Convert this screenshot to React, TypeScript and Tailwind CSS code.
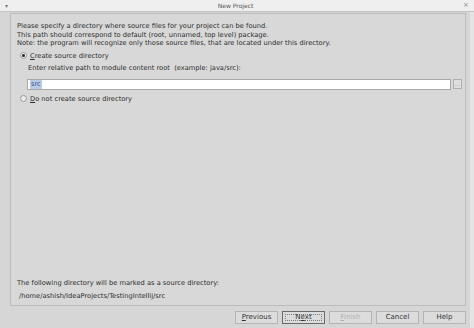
import { useState } from 'react'

const font = { fontFamily: '"DejaVu Sans", "Liberation Sans", sans-serif' }

type DialogButtonProps = {
  label: string
  mnemonic?: number
  disabled?: boolean
  focused?: boolean
}

function DialogButton({ label, mnemonic, disabled, focused }: DialogButtonProps) {
  const text =
    mnemonic === undefined ? (
      label
    ) : (
      <>
        {label.slice(0, mnemonic)}
        <span className="underline">{label[mnemonic]}</span>
        {label.slice(mnemonic + 1)}
      </>
    )

  return (
    <button
      type="button"
      disabled={disabled}
      className={
        focused
          ? 'flex h-[13px] w-[43px] items-center justify-center border border-[#6b6b6b] bg-[#dcdcdc] p-[2px]'
          : 'flex h-[13px] w-[43px] items-center justify-center border border-[#b4b4b4] bg-[#dcdcdc]'
      }
    >
      {focused ? (
        <span className="flex h-full w-full items-center justify-center border border-dotted border-[#7a7a7a] text-[7px] leading-none text-[#333]">{text}</span>
      ) : (
        <span className={disabled ? 'text-[7px] leading-none text-[#b0b0b0]' : 'text-[7px] leading-none text-[#333]'}>{text}</span>
      )}
    </button>
  )
}

function Radio({ checked }: { checked: boolean }) {
  return (
    <span className="flex h-[7px] w-[7px] items-center justify-center rounded-full border border-[#9a9a9a] bg-[#ececec]">
      {checked ? <span className="h-[3px] w-[3px] rounded-full bg-[#222]" /> : null}
    </span>
  )
}

export default function App() {
  const [createDir, setCreateDir] = useState(true)

  return (
    <div className="flex h-[328px] w-[474px] flex-col bg-[#d6d6d6] text-[#2e2e2e]" style={font}>
      <div className="flex h-[12px] items-center justify-between border-b border-[#c4c4c4] bg-[#efefef] px-[5px]">
        <span className="text-[6px] leading-none text-[#777]">▾</span>
        <span className="text-[6px] leading-none text-[#555]">New Project</span>
        <span className="text-[7px] leading-none text-[#888]">×</span>
      </div>

      <div className="flex flex-1 flex-col border-r-[4px] border-[#e4e4e4] pl-[10px] pr-[4px] pt-[1px]">
        <div className="flex flex-1 flex-col border border-[#bcbcbc] bg-[#d8d8d8] pb-[5px] pl-[6px] pr-[3px] pt-[8px] text-[6.7px] leading-[8.5px]">
          <p>Please specify a directory where source files for your project can be found.</p>
          <p>This path should correspond to default (root, unnamed, top level) package.</p>
          <p>Note: the program will recognize only those source files, that are located under this directory.</p>

          <label className="mt-[4px] flex items-center gap-[3px] pl-[3px]" onClick={() => setCreateDir(true)}>
            <Radio checked={createDir} />
            <span>
              <span className="underline">C</span>reate source directory
            </span>
          </label>

          <p className="mt-[4px] pl-[11px]">Enter relative path to module content root&nbsp; (example: java/src):</p>

          <div className="mt-[6px] flex items-center gap-[2px] pl-[10px]">
            <div className="flex h-[11px] flex-1 items-center border border-[#a9a9a9] bg-white px-[2px]">
              <span className="bg-[#b9cbe6] px-[1px] leading-[9px] text-[#3a4f8a]">src</span>
            </div>
            <span className="flex h-[10px] w-[9px] items-center justify-center border border-[#b0b0b0] bg-[#dedede] text-[6px] leading-none text-[#999]">…</span>
          </div>

          <label className="mt-[5px] flex items-center gap-[3px] pl-[3px]" onClick={() => setCreateDir(false)}>
            <Radio checked={!createDir} />
            <span>
              <span className="underline">D</span>o not create source directory
            </span>
          </label>

          <div className="flex-1" />

          <p>The following directory will be marked as a source directory:</p>
          <p className="mt-[4px] pl-[2px]">/home/ashish/IdeaProjects/TestingIntellij/src</p>
        </div>

        <div className="flex h-[22px] items-center justify-end gap-[4px] pr-[0px]">
          <DialogButton label="Previous" mnemonic={0} />
          <DialogButton label="Next" mnemonic={1} focused />
          <DialogButton label="Finish" mnemonic={0} disabled />
          <DialogButton label="Cancel" />
          <DialogButton label="Help" />
        </div>
      </div>
    </div>
  )
}
